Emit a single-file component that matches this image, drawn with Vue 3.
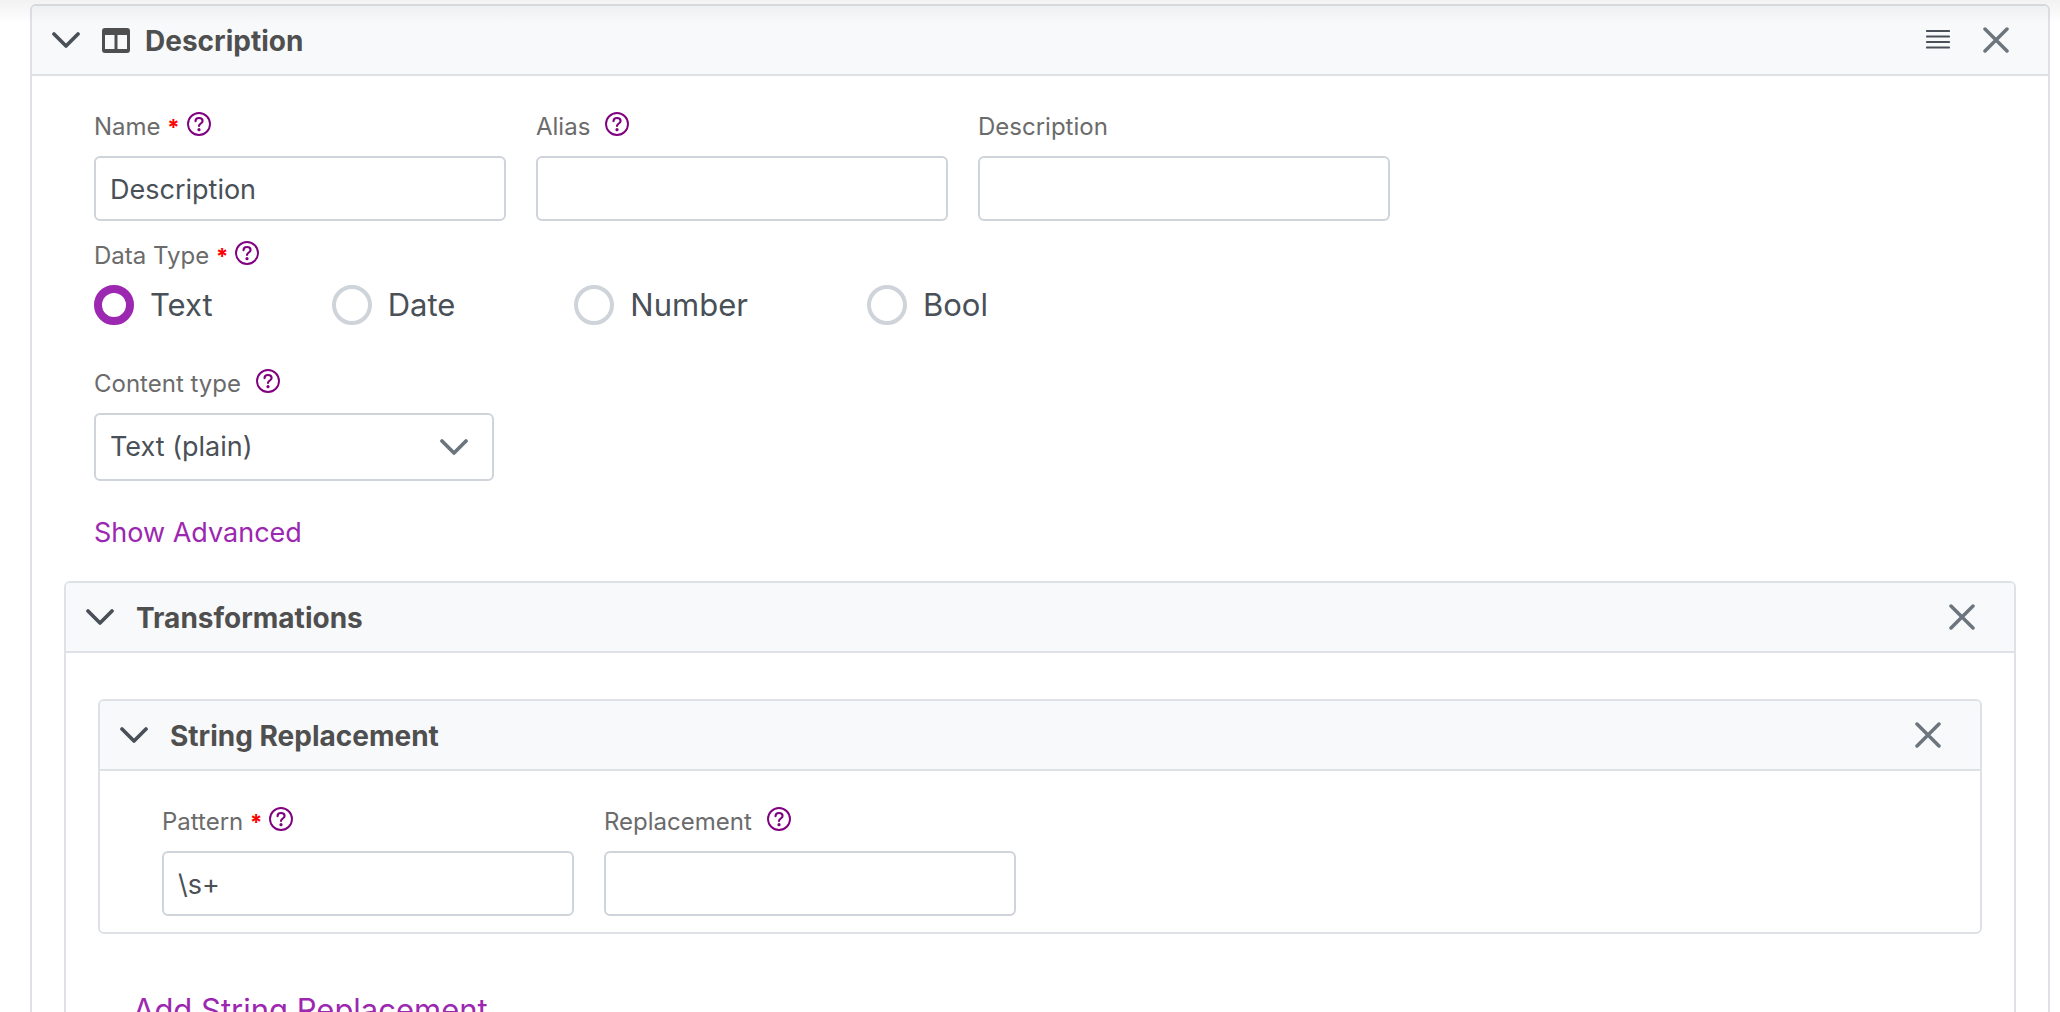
<script setup>
import { ref, h } from 'vue'

const name = ref('Description')
const alias = ref('')
const description = ref('')
const dataType = ref('Text')
const contentType = ref('Text (plain)')
const pattern = ref('\\s+')
const replacement = ref('')
const dataTypes = ['Text', 'Date', 'Number', 'Bool']

const stroke = (d, size, width) => () =>
  h('svg', { width: size[0], height: size[1], viewBox: `0 0 ${size[0]} ${size[1]}`, 'aria-hidden': 'true' }, [
    h('path', { d, fill: 'none', stroke: 'currentColor', 'stroke-width': width, 'stroke-linecap': 'round', 'stroke-linejoin': 'round' }),
  ])

const Chevron = stroke('M2 2 14 14 26 2', [28, 16], 3.7)
const Cross = stroke('M2 2 24 24M24 2 2 24', [26, 26], 3.5)
const Help = () =>
  h('svg', { width: 24, height: 24, viewBox: '0 0 24 24', 'aria-hidden': 'true' }, [
    h('circle', { cx: 12, cy: 12, r: 11, fill: 'none', stroke: 'currentColor', 'stroke-width': 1.9 }),
    h('path', { d: 'M8.500 9.200C8.500 7.100 10 6 12 6s3.600 1.200 3.600 3c0 2.500-3.600 2.500-3.600 5', fill: 'none', stroke: 'currentColor', 'stroke-width': 2.1, 'stroke-linecap': 'round' }),
    h('circle', { cx: 12, cy: 17.7, r: 1.6, fill: 'currentColor' }),
  ])
</script>

<template>
  <main class="page">
    <section class="panel">
      <header class="panel-header">
        <button class="icon-button toggle" aria-label="Collapse Description"><Chevron /></button>
        <svg class="column-icon" width="28" height="25" viewBox="0 0 28 25" aria-hidden="true">
          <path fill="currentColor" fill-rule="evenodd" d="M3 0h22a3 3 0 0 1 3 3v19a3 3 0 0 1-3 3H3a3 3 0 0 1-3-3V3a3 3 0 0 1 3-3ZM3 7v14h9.500V7ZM15.500 7v14H25V7Z" />
        </svg>
        <h2 class="title">Description</h2>
        <div class="actions">
          <button class="icon-button menu" aria-label="Reorder">
            <svg width="24" height="20" viewBox="0 0 24 20" aria-hidden="true">
              <path d="M1 1h22M1 6.500h22M1 12h22M1 17.500h22" stroke="currentColor" stroke-width="2.200" stroke-linecap="round" />
            </svg>
          </button>
          <button class="icon-button close" aria-label="Remove Description"><Cross /></button>
        </div>
      </header>

      <div class="form">
        <div class="field-row">
          <div class="field">
            <div class="label-row">
              <label for="name">Name <span class="required">*</span></label>
              <button class="icon-button help after-star" aria-label="Help for Name"><Help /></button>
            </div>
            <input id="name" v-model="name" class="text-input" type="text" />
          </div>
          <div class="field">
            <div class="label-row">
              <label for="alias">Alias</label>
              <button class="icon-button help" aria-label="Help for Alias"><Help /></button>
            </div>
            <input id="alias" v-model="alias" class="text-input" type="text" />
          </div>
          <div class="field">
            <div class="label-row">
              <label for="description">Description</label>
            </div>
            <input id="description" v-model="description" class="text-input" type="text" />
          </div>
        </div>

        <div class="data-type" role="radiogroup" aria-labelledby="data-type-label">
          <div class="label-row">
            <span id="data-type-label">Data Type <span class="required">*</span></span>
            <button class="icon-button help after-star" aria-label="Help for Data Type"><Help /></button>
          </div>
          <div class="radios">
            <label v-for="type in dataTypes" :key="type" class="radio">
              <input v-model="dataType" type="radio" name="data-type" :value="type" />
              {{ type }}
            </label>
          </div>
        </div>

        <div class="content-type">
          <div class="label-row">
            <label for="content-type">Content type</label>
            <button class="icon-button help" aria-label="Help for Content type"><Help /></button>
          </div>
          <div class="select-box">
            <select id="content-type" v-model="contentType">
              <option>Text (plain)</option>
            </select>
            <Chevron class="select-arrow" />
          </div>
        </div>

        <a class="link" href="#">Show Advanced</a>
      </div>

      <section class="panel nested">
        <header class="panel-header">
          <button class="icon-button toggle" aria-label="Collapse Transformations"><Chevron /></button>
          <h3 class="title">Transformations</h3>
          <div class="actions">
            <button class="icon-button close" aria-label="Remove Transformations"><Cross /></button>
          </div>
        </header>

        <div class="transformations">
          <section class="panel nested">
            <header class="panel-header">
              <button class="icon-button toggle" aria-label="Collapse String Replacement"><Chevron /></button>
              <h4 class="title">String Replacement</h4>
              <div class="actions">
                <button class="icon-button close" aria-label="Remove String Replacement"><Cross /></button>
              </div>
            </header>
            <div class="form">
              <div class="field-row">
                <div class="field">
                  <div class="label-row">
                    <label for="pattern">Pattern <span class="required">*</span></label>
                    <button class="icon-button help after-star" aria-label="Help for Pattern"><Help /></button>
                  </div>
                  <input id="pattern" v-model="pattern" class="text-input" type="text" />
                </div>
                <div class="field">
                  <div class="label-row">
                    <label for="replacement">Replacement</label>
                    <button class="icon-button help" aria-label="Help for Replacement"><Help /></button>
                  </div>
                  <input id="replacement" v-model="replacement" class="text-input" type="text" />
                </div>
              </div>
            </div>
          </section>
          <a class="link add" href="#">Add String Replacement</a>
        </div>
      </section>
    </section>
  </main>
</template>

<style>
body {
  background: #fff;
}
</style>

<style scoped>
.page {
  position: relative;
  box-sizing: border-box;
  height: 100vh;
  overflow: hidden;
  padding: 4px 10px 0 30px;
  font-family: Inter, "Liberation Sans", sans-serif;
  color: #495057;
}
.page::before {
  content: "";
  position: absolute;
  inset: 0 0 auto;
  height: 24px;
  background: linear-gradient(rgba(0, 0, 0, 0.05), rgba(0, 0, 0, 0));
  pointer-events: none;
}
.panel {
  border: 2px solid #dee2e6;
  border-radius: 6px;
}
.nested {
  margin: 0 32px;
}
.panel-header {
  display: flex;
  align-items: center;
  height: 68px;
  padding: 0 39px 0 20px;
  border-bottom: 2px solid #dee2e6;
  border-radius: 4px 4px 0 0;
  background: #f8f9fb;
}
.icon-button {
  display: flex;
  padding: 0;
  border: 0;
  background: none;
  color: inherit;
  cursor: pointer;
}
.toggle {
  margin-right: 22px;
}
.column-icon {
  margin-right: 15px;
  color: #4f4f4f;
}
.title {
  margin: 0;
  padding-top: 2px;
  font-size: 28px;
  font-weight: 700;
  line-height: 32px;
  color: #4f4f4f;
}
.actions {
  display: flex;
  align-items: center;
  gap: 33px;
  margin-left: auto;
}
.close,
.select-arrow {
  color: #6c757d;
}
.form {
  padding: 36px 62px 16px;
}
.field-row {
  display: flex;
  gap: 30px;
}
.field {
  flex: 0 1 412px;
}
.label-row {
  display: flex;
  gap: 15px;
  height: 28px;
  margin-bottom: 16px;
  font-size: 24px;
  line-height: 30px;
  color: #6b6b6b;
}
.required {
  font-size: 22px;
  font-weight: 700;
  color: #f00;
}
.help {
  align-self: flex-start;
  color: #800080;
}
.after-star {
  margin-left: -8px;
}
.text-input {
  display: block;
  box-sizing: border-box;
  width: 100%;
  height: 65px;
  padding: 2px 14px 0;
  border: 2px solid #ced4da;
  border-radius: 6px;
  background: #fff;
  font: 27px/32px Inter, "Liberation Sans", sans-serif;
  color: #495057;
}
.data-type {
  margin-top: 20px;
}
.radios {
  display: flex;
  gap: 119px;
}
.radio {
  display: flex;
  align-items: center;
  gap: 16px;
  height: 40px;
  font-size: 31px;
  line-height: 42px;
}
.radio input {
  appearance: none;
  box-sizing: border-box;
  width: 40px;
  height: 40px;
  margin: 0;
  border: 4px solid #ced4da;
  border-radius: 50%;
  background: #fff;
}
.radio input:checked {
  border: 8px solid #9c27b0;
}
.content-type {
  margin-top: 44px;
}
.select-box {
  position: relative;
  max-width: 400px;
}
.select-box select {
  appearance: none;
  display: block;
  box-sizing: border-box;
  width: 100%;
  height: 68px;
  padding: 0 60px 0 14px;
  border: 2px solid #ced4da;
  border-radius: 6px;
  background: #fff;
  font: 27px/32px Inter, "Liberation Sans", sans-serif;
  color: #495057;
}
.select-arrow {
  position: absolute;
  top: 26px;
  right: 26px;
  pointer-events: none;
}
.link {
  display: table;
  margin-top: 36px;
  margin-bottom: 16px;
  font-size: 27px;
  line-height: 32px;
  color: #9c27b0;
  text-decoration: none;
}
.transformations {
  padding: 46px 0 60px;
}
.add {
  margin: 56px 0 0 67px;
  font-size: 31px;
  line-height: 40px;
}
</style>
